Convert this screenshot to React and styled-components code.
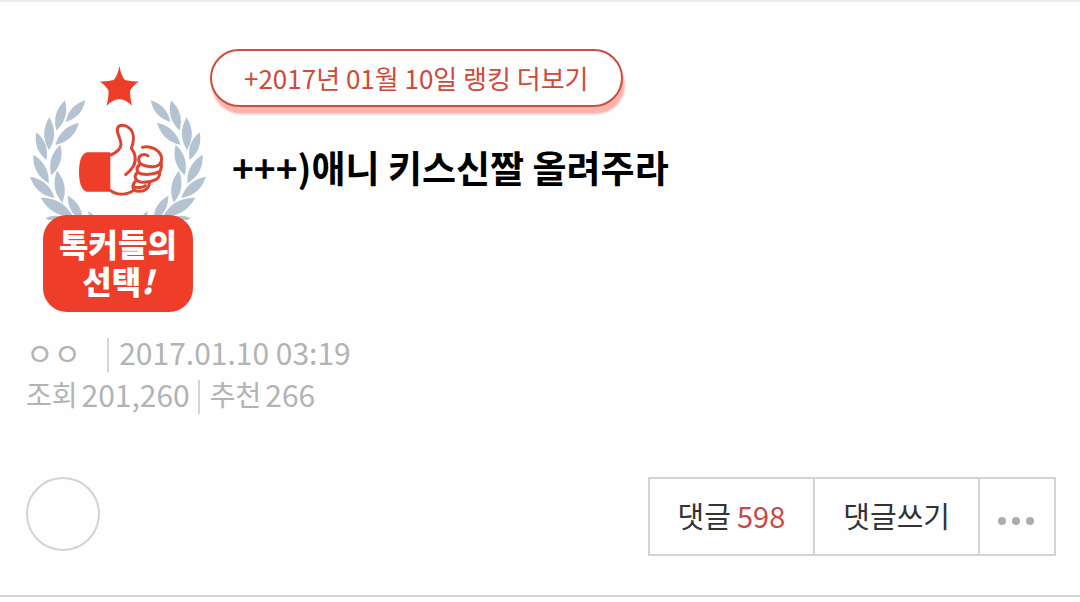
import React from 'react';
import styled, { createGlobalStyle } from 'styled-components';

const GlobalStyle = createGlobalStyle`
    * {
        box-sizing: border-box;
    }

    body {
        margin: 0;
        background-color: #fefefe;
        font-family: "Noto Sans CJK KR", "Noto Sans", sans-serif;
    }
`;

const Post = styled.article`
    border-top: 2px solid #ebebeb;
    border-bottom: 2px solid #d3d3d3;
    padding: 47px 24px 39px 26px;
`;

const Header = styled.header`
    display: flex;
    align-items: flex-start;
`;

const Badge = styled.div`
    display: flex;
    flex-direction: column;
    align-items: center;
    width: 184px;
    padding-top: 15px;
`;

const Emblem = styled.svg`
    display: block;
    width: 184px;
    height: 156px;
`;

const BadgeLabel = styled.strong`
    width: 150px;
    margin-top: -5px;
    padding: 10px 0 13px;
    border-radius: 24px;
    background-color: #ee3d28;
    color: #fff;
    font-size: 32px;
    font-weight: 900;
    line-height: 37px;
    text-align: center;
    position: relative;
`;

const Heading = styled.div`
    flex: 1;
    display: flex;
    flex-direction: column;
    align-items: flex-start;
`;

const RankingLink = styled.a`
    padding: 0 32px;
    border: 2px solid #c9503f;
    border-radius: 29px;
    box-shadow: 2px 7px 2px #fab4ac;
    background-color: #fefefe;
    color: #cf4a38;
    font-size: 26px;
    line-height: 54px;
    text-decoration: none;
`;

const Title = styled.h1`
    margin: 33px 0 0 22px;
    color: #000;
    font-size: 37px;
    font-weight: 700;
    line-height: 54px;
`;

const Meta = styled.div`
    margin-top: 19px;
    color: #b3b3b3;
    font-size: 30px;
    line-height: 42px;
`;

const MetaRow = styled.div`
    display: flex;
    align-items: center;
`;

const MetaLabel = styled.span`
    margin-right: 4px;
    font-size: 28px;
`;

const Divider = styled.span`
    width: 2px;
    height: 34px;
    margin: 6px 10px 0 ${props => props.$wide ? '26px' : '8px'};
    background-color: #d6d6d6;
`;

const Footer = styled.footer`
    display: flex;
    justify-content: space-between;
    align-items: flex-start;
    margin-top: 62px;
`;

const RoundButton = styled.button`
    width: 74px;
    height: 74px;
    border: 2px solid #d3d3d3;
    border-radius: 50%;
    background: none;
`;

const Actions = styled.div`
    display: flex;
    border: 2px solid #d3d3d3;
`;

const ActionButton = styled.button`
    display: flex;
    align-items: center;
    height: 75px;
    padding: ${props => props.$more ? '9px 17px 0' : '0 28px 4px'};
    border: 0;
    background: none;
    color: #333;
    font-family: inherit;
    font-size: 29px;

    & + & {
        border-left: 2px solid #d3d3d3;
    }
`;

const Count = styled.span`
    margin-left: 6px;
    color: #cc4748;
`;

// [tip x, tip y, base x, base y] of each leaf on the left branch
const leaves = [
    [196, 137, 137, 202],
    [135, 137, 109, 228],
    [177, 204, 106, 271],
    [88, 188, 87, 287],
    [49, 233, 79, 316],
    [121, 270, 94, 362],
    [40, 300, 86, 386],
    [111, 348, 127, 444],
    [30, 366, 104, 430],
    [62, 429, 160, 486],
    [143, 423, 188, 500],
    [76, 490, 150, 500],
    [204, 470, 226, 500],
];

const leafPath = ([tx, ty, bx, by]) => {
    const dx = (bx - tx) * 0.3;
    const dy = (by - ty) * 0.3;
    const mx = (tx + bx) / 2;
    const my = (ty + by) / 2;
    return `M${tx} ${ty}Q${mx - dy} ${my + dx} ${bx} ${by}Q${mx + dy} ${my - dx} ${tx} ${ty}Z`;
};

const TalkerEmblem = () => (
    <Emblem viewBox="18 28 552 468" aria-hidden="true">
        <g fill="#b4c3d1">
            {leaves.map((leaf, i) => <path key={i} d={leafPath(leaf)} />)}
            <g transform="matrix(-1 0 0 1 588 0)">
                {leaves.map((leaf, i) => <path key={i} d={leafPath(leaf)} />)}
            </g>
        </g>
        <path
            fill="#ee3d28"
            d="M298 34Q304 66 315 76Q334 81 357 80Q337 95 330 109Q330 130 336 153Q316 134 298 133Q280 134 260 153Q266 130 266 109Q259 95 239 80Q262 81 281 76Q292 66 298 34Z"
        />
        <g transform="translate(162 195)">
            <path fill="#ee3d28" d="M109 98H38Q15 106 15 157Q15 208 38 216H109Z" />
            <g fill="none" stroke="#dd4532" strokeWidth="9" strokeLinecap="round" strokeLinejoin="round">
                <path d="M110 106C124 100 140 90 141 74C141 58 128 44 130 28C132 14 152 14 164 24C180 36 182 60 172 86C184 100 188 122 178 140C172 150 164 158 155 165" />
                <path d="M110 213C128 228 160 226 178 212" />
                <path d="M205 83C226 76 260 90 263 116C264 132 252 142 236 141C212 140 194 136 194 120C194 106 210 100 222 108" />
                <path d="M196 136C184 146 188 160 204 163C222 166 240 163 256 157C263 148 263 136 261 128" />
                <path d="M190 158C178 170 184 184 200 187C218 189 232 187 247 179C257 172 258 164 256 157" />
                <path d="M186 183C172 196 174 212 192 215C210 216 224 208 227 189" />
                <path d="M178 201C192 206 208 204 214 198" />
            </g>
        </g>
    </Emblem>
);

const App = () => {
    return (
        <>
            <GlobalStyle />
            <Post>
                <Header>
                    <Badge>
                        <TalkerEmblem />
                        <BadgeLabel>톡커들의<br />선택<i>!</i></BadgeLabel>
                    </Badge>
                    <Heading>
                        <RankingLink href="#ranking">+2017년 01월 10일 랭킹 더보기</RankingLink>
                        <Title>+++)애니 키스신짤 올려주라</Title>
                    </Heading>
                </Header>

                <Meta>
                    <MetaRow>
                        <span>ㅇㅇ</span>
                        <Divider $wide />
                        <time dateTime="2017-01-10T03:19">2017.01.10 03:19</time>
                    </MetaRow>
                    <MetaRow>
                        <MetaLabel>조회</MetaLabel>
                        <span>201,260</span>
                        <Divider />
                        <MetaLabel>추천</MetaLabel>
                        <span>266</span>
                    </MetaRow>
                </Meta>

                <Footer>
                    <RoundButton type="button" />
                    <Actions>
                        <ActionButton type="button">댓글<Count>598</Count></ActionButton>
                        <ActionButton type="button">댓글쓰기</ActionButton>
                        <ActionButton type="button" aria-label="더보기" $more>
                            <svg width="40" height="10" viewBox="0 0 40 10" fill="#adadad">
                                <circle cx="5" cy="5" r="4" />
                                <circle cx="19" cy="5" r="4" />
                                <circle cx="33" cy="5" r="4" />
                            </svg>
                        </ActionButton>
                    </Actions>
                </Footer>
            </Post>
        </>
    );
};

export default App;
